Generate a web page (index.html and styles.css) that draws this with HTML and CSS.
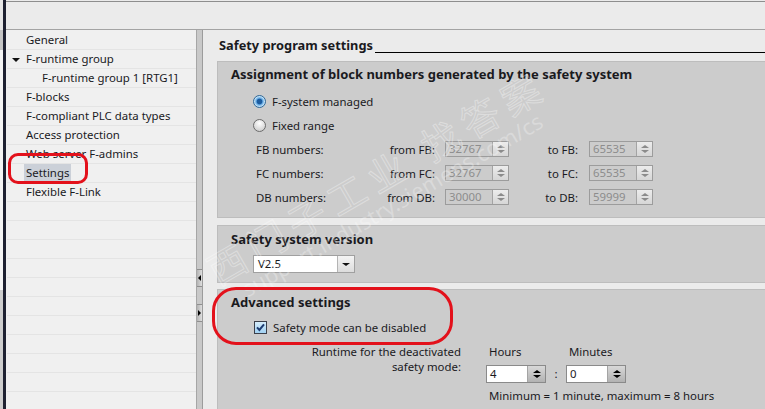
FILE: index.html
```html
<!DOCTYPE html>
<html lang="en">
<head>
    <meta charset="UTF-8">
    <meta name="viewport" content="width=device-width, initial-scale=1.0">
    <title>Safety program settings</title>
    <link rel="stylesheet" href="styles.css">
</head>
<body>
    <div class="app">
        <div class="edge"></div>
        <div class="workspace">
            <div class="topbar"></div>
            <div class="panes">
                <nav class="nav">
                    <div class="nav-row">General</div>
                    <div class="nav-row"><span class="caret"></span>F-runtime group</div>
                    <div class="nav-row sub">F-runtime group 1 [RTG1]</div>
                    <div class="nav-row">F-blocks</div>
                    <div class="nav-row">F-compliant PLC data types</div>
                    <div class="nav-row">Access protection</div>
                    <div class="nav-row">Web server F-admins</div>
                    <div class="nav-row"><span class="selected">Settings</span></div>
                    <div class="nav-row">Flexible F-Link</div>
                    <div class="nav-row"></div>
                    <div class="nav-row"></div>
                    <div class="nav-row"></div>
                    <div class="nav-row"></div>
                    <div class="nav-row"></div>
                    <div class="nav-row"></div>
                    <div class="nav-row"></div>
                    <div class="nav-row"></div>
                    <div class="nav-row"></div>
                    <div class="nav-row"></div>
                    <div class="nav-row"></div>
                </nav>

                <div class="splitter">
                    <div class="split-btn"><span class="arr-left"></span></div>
                    <div class="split-btn"><span class="arr-right"></span></div>
                </div>

                <main class="main">
                    <div class="page-title">
                        <span>Safety program settings</span>
                        <span class="title-line"></span>
                    </div>

                    <section class="section first">
                        <h2>Assignment of block numbers generated by the safety system</h2>
                        <div class="rows">
                            <div class="row">
                                <span class="radio on"></span>
                                <span class="opt-label">F-system managed</span>
                            </div>
                            <div class="row">
                                <span class="radio"></span>
                                <span class="opt-label">Fixed range</span>
                            </div>
                            <div class="row range">
                                <span class="range-name">FB numbers:</span>
                                <span class="from-label">from FB:</span>
                                <span class="spin off"><span class="spin-val">32767</span><span class="spin-btn"><i class="up"></i><i class="down"></i></span></span>
                                <span class="to-label">to FB:</span>
                                <span class="spin off"><span class="spin-val">65535</span><span class="spin-btn"><i class="up"></i><i class="down"></i></span></span>
                            </div>
                            <div class="row range">
                                <span class="range-name">FC numbers:</span>
                                <span class="from-label">from FC:</span>
                                <span class="spin off"><span class="spin-val">32767</span><span class="spin-btn"><i class="up"></i><i class="down"></i></span></span>
                                <span class="to-label">to FC:</span>
                                <span class="spin off"><span class="spin-val">65535</span><span class="spin-btn"><i class="up"></i><i class="down"></i></span></span>
                            </div>
                            <div class="row range">
                                <span class="range-name">DB numbers:</span>
                                <span class="from-label">from DB:</span>
                                <span class="spin off"><span class="spin-val">30000</span><span class="spin-btn"><i class="up"></i><i class="down"></i></span></span>
                                <span class="to-label">to DB:</span>
                                <span class="spin off"><span class="spin-val">59999</span><span class="spin-btn"><i class="up"></i><i class="down"></i></span></span>
                            </div>
                        </div>
                    </section>

                    <section class="section second">
                        <h2>Safety system version</h2>
                        <div class="combo">
                            <span class="combo-val">V2.5</span>
                            <span class="combo-btn"><i class="down"></i></span>
                        </div>
                    </section>

                    <section class="section third">
                        <h2>Advanced settings</h2>
                        <div class="row check-row">
                            <svg class="check" width="13" height="13" viewBox="0 0 13 13">
                                <defs>
                                    <linearGradient id="cb" x1="0" y1="0" x2="0" y2="1">
                                        <stop offset="0" stop-color="#d7eefc"/>
                                        <stop offset="1" stop-color="#9fd0f2"/>
                                    </linearGradient>
                                </defs>
                                <rect x="0.5" y="0.5" width="12" height="12" fill="url(#cb)" stroke="#3b3f4a"/>
                                <path d="M3 6.4 L5.4 9 L10 3.4" fill="none" stroke="#1d3c72" stroke-width="2"/>
                            </svg>
                            <span class="opt-label">Safety mode can be disabled</span>
                        </div>
                        <div class="runtime">
                            <div class="runtime-label">Runtime for the deactivated<br>safety mode:</div>
                            <div class="runtime-grid">
                                <span class="unit">Hours</span>
                                <span></span>
                                <span class="unit">Minutes</span>
                                <span class="spin on"><span class="spin-val">4</span><span class="spin-btn"><i class="up"></i><i class="down"></i></span></span>
                                <span class="colon">:</span>
                                <span class="spin on"><span class="spin-val">0</span><span class="spin-btn"><i class="up"></i><i class="down"></i></span></span>
                                <span class="limits">Minimum = 1 minute, maximum = 8 hours</span>
                            </div>
                        </div>
                    </section>
                </main>
            </div>
        </div>

        <div class="watermark">
            <div class="wm-cn">西门子工业 找答案</div>
            <div class="wm-url">support.industry.siemens.com/cs</div>
        </div>

        <div class="mark mark-nav"></div>
        <div class="mark mark-adv"></div>
    </div>
</body>
</html>
```

FILE: styles.css
```css
body {
    margin: 0;
    background-color: #ebebeb;
    font-family: "Noto Sans", sans-serif;
    font-size: 11.4px;
    color: #1a1a1e;
}
.app {
    position: relative;
    display: flex;
    width: 765px;
    height: 409px;
    overflow: hidden;
}
.edge {
    flex: none;
    width: 3px;
    background: linear-gradient(#e6e6e6 0 30px, #c4c4c4 30px 50px, #f4f4f4 50px 290px, #cdcdcd 290px);
    border-right: 3px solid #1e2131;
}
.workspace {
    flex: 1;
    display: flex;
    flex-direction: column;
    min-width: 0;
}
.topbar {
    flex: none;
    height: 27px;
    margin-top: 1px;
    border-top: 1px solid #8e8e8e;
    border-bottom: 1px solid #a3a3a3;
    background-color: #ebebeb;
}
.panes {
    flex: 1;
    display: flex;
    min-height: 0;
}

/* left tree */
.nav {
    flex: none;
    width: 190px;
    padding-top: 1px;
    background-color: #f0f0f0;
}
.nav-row {
    box-sizing: border-box;
    height: 19px;
    line-height: 18px;
    padding-left: 19px;
    margin-left: 1px;
    border-bottom: 1px solid #e4e4e4;
    white-space: nowrap;
}
.nav-row.sub {
    padding-left: 35px;
}
.caret {
    display: inline-block;
    width: 0;
    height: 0;
    margin: 0 6px 0 -14px;
    border-left: 4px solid transparent;
    border-right: 4px solid transparent;
    border-top: 4px solid #111;
    vertical-align: middle;
}
.selected {
    display: inline-block;
    padding: 0 2px;
    margin-left: -2px;
    background-color: #cbd0d8;
}

/* splitter */
.splitter {
    flex: none;
    width: 5px;
    border-left: 1px solid #a6a6a6;
    border-right: 1px solid #9c9c9c;
    background-color: #c9c9c9;
    padding-top: 239px;
}
.split-btn {
    height: 16px;
    margin-bottom: 17px;
    background: linear-gradient(90deg, #b3b3b3, #dedede);
    border-top: 1px solid #8f8f8f;
    border-bottom: 1px solid #8f8f8f;
    display: flex;
    align-items: center;
}
.arr-left {
    width: 0;
    height: 0;
    margin-left: 1px;
    border-top: 3px solid transparent;
    border-bottom: 3px solid transparent;
    border-right: 3px solid #000;
}
.arr-right {
    width: 0;
    height: 0;
    margin-left: 1px;
    border-top: 3px solid transparent;
    border-bottom: 3px solid transparent;
    border-left: 3px solid #000;
}

/* main editor */
.main {
    flex: 1;
    min-width: 0;
    background-color: #ebebeb;
}
.page-title {
    display: flex;
    height: 16px;
    line-height: 16px;
    margin: 7px 0 0 16px;
    font-weight: bold;
    font-size: 12.8px;
    white-space: nowrap;
}
.title-line {
    flex: 1;
    margin-left: 2px;
    border-bottom: 1px solid #000;
}
.section {
    margin: 8px 0 0 14px;
    padding: 4px 0 8px 13px;
    background-color: #cccccc;
    border-top: 1px solid #bdbdbd;
    border-left: 1px solid #bdbdbd;
    border-bottom: 1px solid #bdbdbd;
}
.section.second {
    margin-top: 7px;
    padding: 5px 0 9px 13px;
}
.section.third {
    margin-top: 6px;
    padding-bottom: 30px;
}
.section h2 {
    margin: 0;
    height: 16px;
    line-height: 16px;
    font-size: 13px;
    font-weight: bold;
    white-space: nowrap;
}
.rows {
    margin-top: 7px;
}
.row {
    display: flex;
    align-items: center;
    height: 24px;
    padding-left: 22px;
    white-space: nowrap;
}
.opt-label {
    margin-left: 6px;
}
.radio {
    box-sizing: border-box;
    width: 13px;
    height: 13px;
    border-radius: 50%;
    border: 1px solid #6c6c6c;
    background: radial-gradient(circle at 50% 30%, #ffffff, #d0d0d0 80%);
}
.radio.on {
    border-color: #2f6796;
    background: radial-gradient(circle, #1b5b9f 0 2.4px, #5da3de 3.2px, #bfe0f7 5px);
}
.row.range {
    padding-left: 25px;
}
.range-name {
    width: 120px;
}
.from-label {
    width: 59px;
    text-align: right;
    margin-right: 10px;
}
.to-label {
    width: 69px;
    text-align: right;
    margin-right: 11px;
}

/* spin boxes */
.spin {
    display: flex;
    box-sizing: border-box;
    height: 16px;
    width: 64px;
    border: 1px solid #9c9c9c;
}
.spin-val {
    flex: 1;
    padding-left: 3px;
    line-height: 14px;
}
.spin-btn {
    width: 15px;
    border-left: 1px solid #a4a4a4;
    display: flex;
    flex-direction: column;
    align-items: center;
    justify-content: center;
    gap: 2px;
}
.up, .down {
    display: block;
    width: 0;
    height: 0;
    border-left: 4px solid transparent;
    border-right: 4px solid transparent;
}
.up {
    border-bottom: 3px solid currentColor;
}
.down {
    border-top: 3px solid currentColor;
}
.spin.off {
    color: #8d8d8d;
    background-color: #cccccc;
}
.spin.off .spin-btn {
    background: linear-gradient(#ececec, #d6d6d6);
    color: #8b8b8b;
}
.spin.on {
    height: 18px;
    width: 60px;
    border-color: #8a8a8a;
    background-color: #ffffff;
    color: #1a1a1e;
}
.spin.on .spin-val {
    line-height: 16px;
}
.spin.on .spin-btn {
    width: 17px;
    background: linear-gradient(#d8d8d8, #b2b2b2);
    color: #000;
}

/* dropdown */
.combo {
    display: flex;
    box-sizing: border-box;
    width: 102px;
    height: 18px;
    margin: 8px 0 0 22px;
    border: 1px solid #a0a0a0;
    background-color: #ffffff;
}
.combo-val {
    flex: 1;
    padding-left: 4px;
    line-height: 16px;
}
.combo-btn {
    width: 16px;
    border-left: 1px solid #b4b4b4;
    background: linear-gradient(#f4f4f4, #dcdcdc);
    display: flex;
    align-items: center;
    justify-content: center;
    color: #111;
}

/* advanced */
.check-row {
    margin-top: 5px;
    padding-left: 23px;
}
.check {
    display: block;
}
.runtime {
    display: flex;
    margin-top: 5px;
}
.runtime-label {
    width: 230px;
    text-align: right;
    line-height: 15px;
}
.runtime-grid {
    display: grid;
    grid-template-columns: 60px 20px 59px;
    grid-template-rows: 16px 18px 16px;
    row-gap: 5px;
    margin-left: 25px;
    line-height: 16px;
}
.unit {
    padding-left: 3px;
}
.colon {
    text-align: center;
    line-height: 18px;
}
.limits {
    grid-column: 1 / 4;
    padding-left: 3px;
    white-space: nowrap;
}

/* overlays */
.mark {
    position: absolute;
    box-sizing: border-box;
    border: 3px solid #e3111b;
}
.mark-nav {
    left: 8px;
    top: 153px;
    width: 80px;
    height: 31px;
    border-radius: 10px;
}
.mark-adv {
    left: 212px;
    top: 287px;
    width: 241px;
    height: 58px;
    border-radius: 24px;
}
.watermark {
    position: absolute;
    left: 200px;
    top: 255px;
    transform: rotate(-30deg);
    transform-origin: 0 0;
    pointer-events: none;
    white-space: nowrap;
}
.wm-cn {
    font-family: "Noto Sans CJK SC", sans-serif;
    font-size: 38px;
    line-height: 40px;
    letter-spacing: 8px;
    color: transparent;
    -webkit-text-stroke: 1px rgba(255, 255, 255, 0.35);
}
.wm-url {
    font-family: "Noto Sans", sans-serif;
    font-size: 22px;
    line-height: 24px;
    padding-left: 20px;
    color: rgba(255, 255, 255, 0.28);
}
```
